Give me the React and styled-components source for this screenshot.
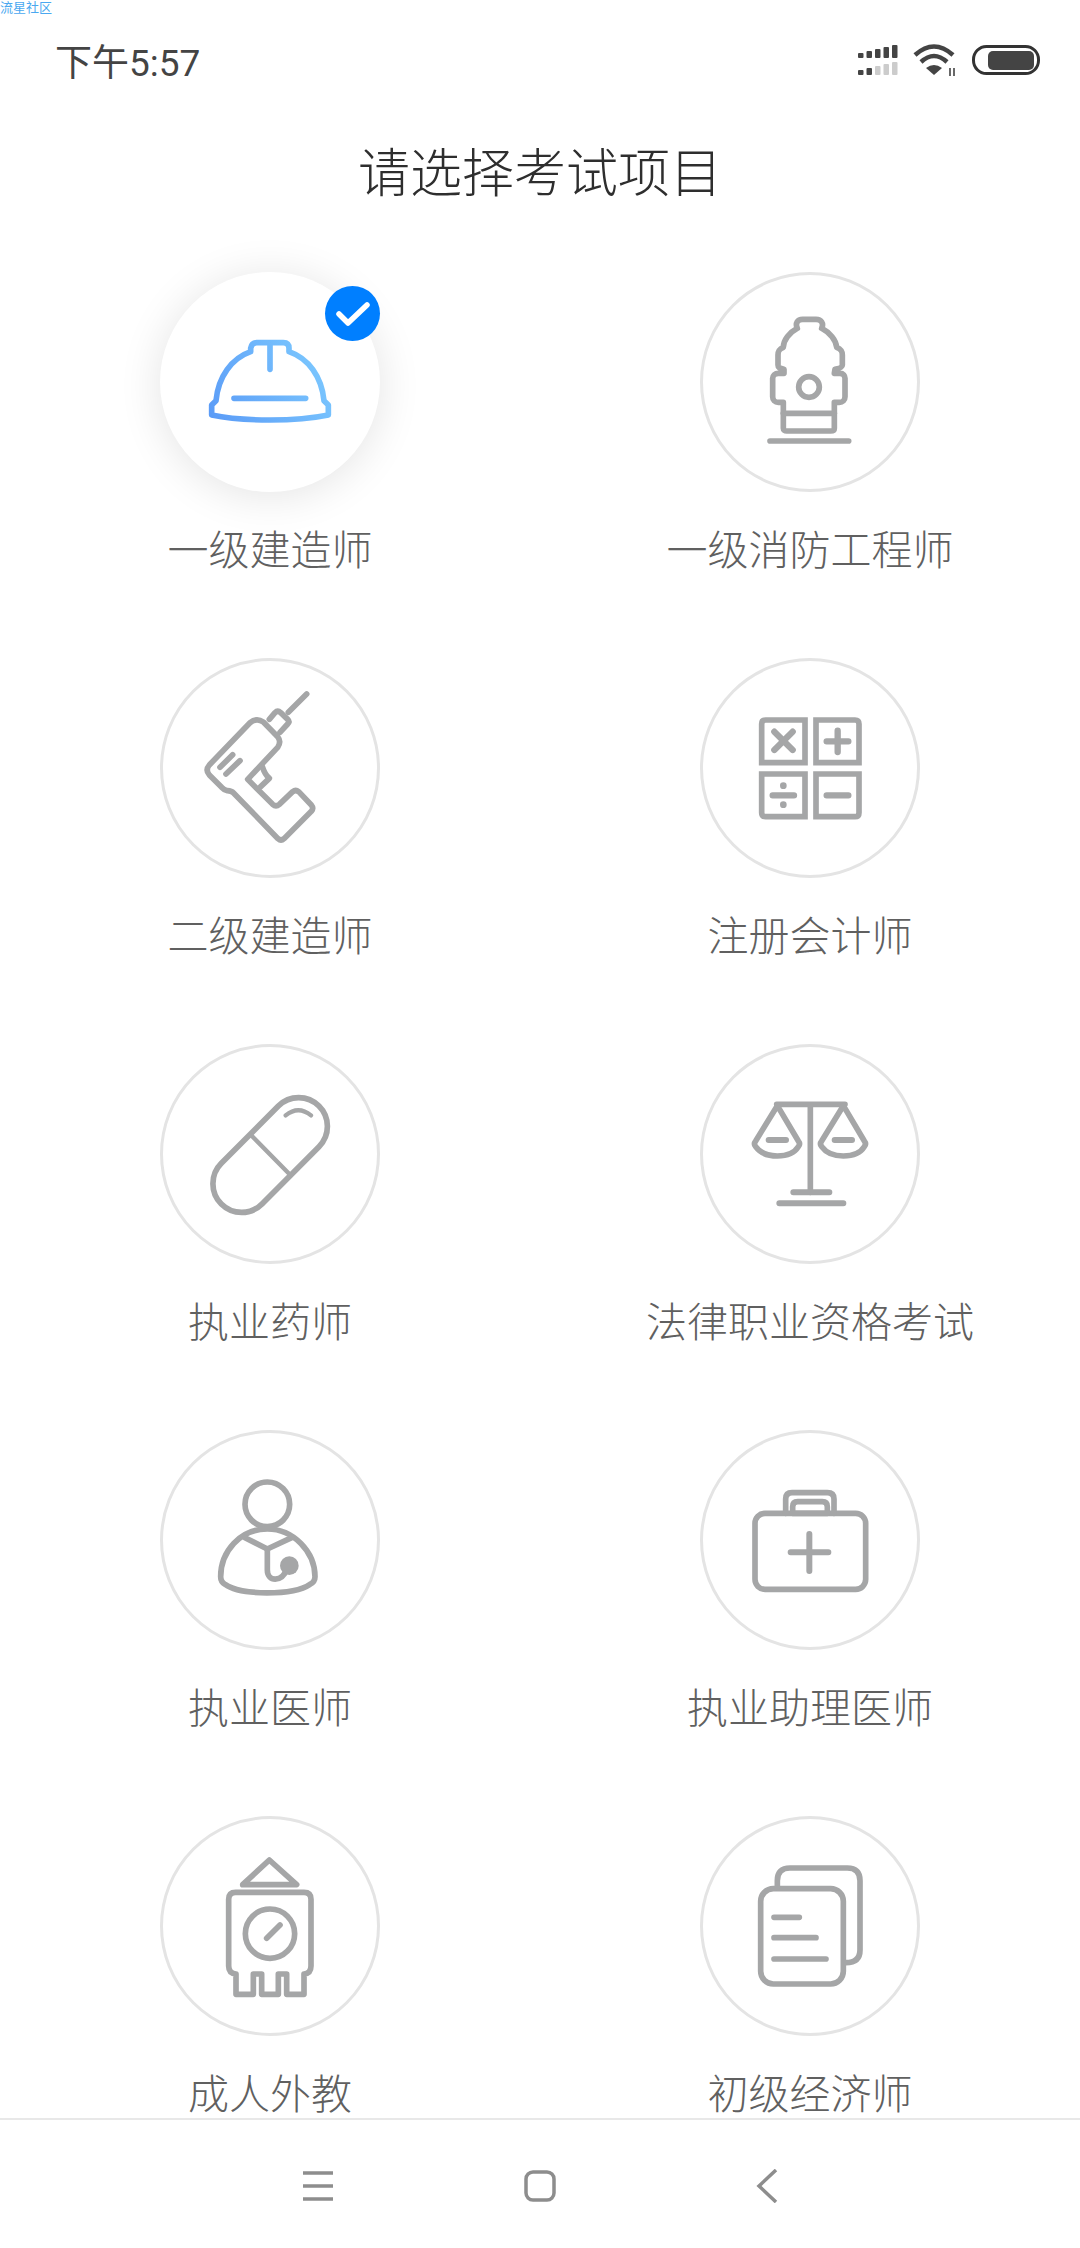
import React from 'react';
import styled, { createGlobalStyle } from 'styled-components';

const GlobalStyle = createGlobalStyle`
  html, body {
    margin: 0;
    padding: 0;
    background: #fff;
  }
`;

const Page = styled.div`
  width: 1080px;
  height: 2248px;
  display: flex;
  flex-direction: column;
  overflow: hidden;
  background: #fff;
  font-family: 'Noto Sans CJK SC', 'Noto Sans', sans-serif;
`;

const Tag = styled.div`
  height: 14px;
  font-size: 13px;
  line-height: 13px;
  color: #4aa8f0;
`;

const StatusBar = styled.div`
  height: 92px;
  padding: 0 40px 0 55px;
  display: flex;
  align-items: center;
  justify-content: space-between;
`;

const Time = styled.div`
  font-size: 37px;
  color: #444;
  font-family: 'Roboto', 'Noto Sans CJK SC', sans-serif;
`;

const StatusIcons = styled.div`
  display: flex;
  align-items: center;
  gap: 15px;
`;

const Title = styled.h1`
  margin: 28px 0 0;
  font-size: 52px;
  line-height: 72px;
  font-weight: 300;
  color: #2e2e2e;
  text-align: center;
`;

const Main = styled.main`
  flex: 1;
  min-height: 0;
  padding-top: 66px;
  display: grid;
  grid-template-columns: 1fr 1fr;
  grid-auto-rows: 386px;
`;

const Cell = styled.div`
  display: flex;
  flex-direction: column;
  align-items: center;
`;

const Circle = styled.div`
  position: relative;
  width: 220px;
  height: 220px;
  box-sizing: border-box;
  border-radius: 50%;
  background: #fff;
  border: ${(p) => (p.$active ? 'none' : '3px solid #e4e4e4')};
  box-shadow: ${(p) => (p.$active ? '0 4px 44px rgba(0, 0, 0, 0.11)' : 'none')};
  display: flex;
  align-items: center;
  justify-content: center;
`;

const Label = styled.div`
  margin-top: 30px;
  font-size: 41px;
  line-height: 50px;
  font-weight: 300;
  color: #606060;
`;

const Badge = styled.div`
  position: absolute;
  top: 14px;
  right: 0;
  width: 55px;
  height: 55px;
  border-radius: 50%;
  background: #007fff;
  display: flex;
  align-items: center;
  justify-content: center;
`;

const NavBar = styled.nav`
  position: relative;
  height: 130px;
  flex: none;
  box-sizing: border-box;
  border-top: 2px solid #e8e8e8;
  padding: 4px 0 0 298px;
  display: flex;
  align-items: center;
  background: #fff;
`;

const NavItem = styled.div`
  width: 40px;
  margin-left: ${(p) => p.$gap || 0}px;
  display: flex;
  justify-content: center;
`;

const IconSvg = styled.svg`
  position: absolute;
  left: ${(p) => (p.$active ? 0 : -3)}px;
  top: ${(p) => (p.$active ? 0 : -3)}px;
  width: 220px;
  height: 220px;
  fill: none;
  stroke: ${(p) => p.$stroke || '#a5a6a7'};
  stroke-width: 17;
  stroke-linecap: round;
  stroke-linejoin: round;
`;

const NavIcon = styled.svg`
  fill: none;
  stroke: #8d8d8d;
  stroke-width: 3.5;
`;

const HelmetIcon = () => (
  <IconSvg viewBox="90 66 660 660" $active $stroke="url(#helmetGrad)">
    <defs>
      <linearGradient id="helmetGrad" gradientUnits="userSpaceOnUse" x1="245" y1="500" x2="595" y2="300">
        <stop offset="0" stopColor="#5b9cf7" />
        <stop offset="1" stopColor="#7ecbff" />
      </linearGradient>
    </defs>
    <path d="M245 465 L258 452 C265 380 305 325 362 305 L362 295 Q365 278 380 278 L460 278 Q477 278 477 295 L477 305 C535 325 575 380 582 452 L595 465 L595 495 C500 515 340 515 245 495 Z" />
    <path d="M420 285 L420 358 M312 445 L527 445" />
  </IconSvg>
);

const HydrantIcon = () => (
  <IconSvg viewBox="60 36 660 660">
    <path d="M352 205 C345 190 352 178 368 178 L408 178 C424 178 432 190 425 205 C450 218 468 240 470 262 C485 268 487 275 487 285 L487 315 C487 322 480 325 465 328 L463 340 L480 340 C490 340 495 347 495 355 L495 410 C495 420 488 427 478 427 L463 427 L463 505 C463 511 458 513 452 513 L320 513 C314 513 310 510 310 505 L310 427 L295 427 C285 427 278 420 278 410 L278 355 C278 347 285 340 295 340 L312 340 L312 328 C295 325 294 320 294 315 L294 285 C294 275 296 268 310 262 C310 240 328 218 352 205 Z" />
    <path d="M310 460 L463 460" />
    <circle cx="387" cy="381" r="31" />
    <path d="M270 543 L506 543" />
  </IconSvg>
);

const DrillIcon = () => (
  <IconSvg viewBox="30 24 660 660">
    <path d="M470 132 L415 187" />
    <path d="M358 208 L375 188 Q383 180 392 188 L413 208 Q420 215 413 222 L390 247" />
    <path d="M178 345 L300 218 Q320 202 340 216 L383 260 Q395 275 383 292 L293 388 L368 463 Q378 472 388 463 L428 425 Q437 418 446 425 L484 465 Q492 475 484 484 L402 566 Q393 574 384 566 L250 428 Q245 423 232 422 Q222 420 215 412 L178 375 Q165 360 178 345 Z" />
    <path d="M337 350 Q345 375 358 385 L332 410" />
    <path d="M210 352 L248 314 M228 372 L270 332" />
  </IconSvg>
);

const CalcIcon = () => (
  <IconSvg viewBox="30 24 660 660">
    <path strokeLinejoin="miter" d="M215 338 L215 222 Q215 210 227 210 L345 210 L345 338 Z" />
    <path strokeLinejoin="miter" d="M378 210 L495 210 Q507 210 507 222 L507 338 L378 338 Z" />
    <path strokeLinejoin="miter" d="M215 372 L345 372 L345 500 L227 500 Q215 500 215 488 Z" />
    <path strokeLinejoin="miter" d="M378 372 L507 372 L507 488 Q507 500 495 500 L378 500 Z" />
    <path strokeWidth="19" d="M253 245 L308 300 M308 245 L253 300 M410 274 L475 274 M443 242 L443 306 M248 436 L312 436 M410 436 L475 436" />
    <circle cx="280" cy="407" r="10" fill="#a5a6a7" stroke="none" />
    <circle cx="280" cy="464" r="10" fill="#a5a6a7" stroke="none" />
  </IconSvg>
);

const PillIcon = () => (
  <IconSvg viewBox="30 12 660 660">
    <path d="M385 198 A86 86 0 0 1 507 320 L336 492 A86 86 0 0 1 214 370 Z" />
    <path strokeWidth="13" d="M302 284 L418 402 M407 226 Q445 195 483 226" />
  </IconSvg>
);

const ScaleIcon = () => (
  <IconSvg viewBox="30 12 660 660">
    <path d="M260 193 L465 193 M361 193 L361 457" />
    <path strokeWidth="18" d="M310 457 L418 457 M268 490 L460 490" />
    <path d="M262 197 L197 303 Q190 312 197 320 C215 345 240 348 262 348 C285 348 310 345 325 320 Q332 312 325 303 Z" />
    <path d="M460 197 L395 303 Q388 312 395 320 C413 345 438 348 460 348 C483 348 508 345 523 320 Q530 312 523 303 Z" />
    <path strokeWidth="18" d="M236 300 L288 300 M434 300 L486 300" />
  </IconSvg>
);

const DoctorIcon = () => (
  <IconSvg viewBox="30 15 660 660">
    <circle cx="352" cy="238" r="67" />
    <path d="M352 312 C270 312 212 380 212 455 Q212 470 225 478 C270 512 430 512 480 478 Q495 470 495 455 C495 380 430 312 352 312 Z" />
    <path d="M285 338 L352 372 L425 338" />
    <path d="M352 372 L352 435 C352 470 395 475 412 430" />
    <circle cx="418" cy="422" r="28" fill="#a5a6a7" stroke="none" />
  </IconSvg>
);

const KitIcon = () => (
  <IconSvg viewBox="30 15 660 660">
    <rect x="195" y="265" width="332" height="228" rx="30" />
    <path d="M287 265 L287 222 Q287 203 306 203 L412 203 Q432 203 432 222 L432 265" />
    <path d="M308 265 L308 245 Q308 230 323 230 L397 230 Q412 230 412 245 L412 265 Z" />
    <path strokeWidth="18" d="M302 382 L415 382 M358 327 L358 438" />
  </IconSvg>
);

const ClockIcon = () => (
  <IconSvg viewBox="30 18 660 660">
    <path d="M358 150 L440 224 L278 224 Z" />
    <path d="M236 268 Q236 247 257 247 L462 247 Q483 247 483 268 L483 468 Q483 490 462 492 L462 553 L410 553 L410 492 L385 492 L385 553 L335 553 L335 492 L310 492 L310 553 L258 553 L258 492 Q236 490 236 468 Z" />
    <circle cx="360" cy="371" r="74" />
    <path d="M350 385 L390 345" />
  </IconSvg>
);

const DocsIcon = () => (
  <IconSvg viewBox="30 18 660 660">
    <rect x="212" y="236" width="248" height="286" rx="38" />
    <path d="M262 232 L262 212 Q262 174 300 174 L472 174 Q510 174 510 212 L510 420 Q510 458 468 458" />
    <path d="M252 322 L328 322 M252 383 L378 383 M252 447 L408 447" />
  </IconSvg>
);

const SignalIcon = () => (
  <svg width="40" height="30" viewBox="0 0 40 30">
    <g fill="#444">
      <rect x="0" y="8" width="5.5" height="5" rx="1" />
      <rect x="8.5" y="6" width="5.5" height="7" rx="1" />
      <rect x="17" y="4" width="5.5" height="9" rx="1" />
      <rect x="25.5" y="2" width="5.5" height="11" rx="1" />
      <rect x="34" y="0" width="5.5" height="13" rx="1" />
      <rect x="0" y="25" width="5.5" height="5" rx="1" />
      <rect x="8.5" y="23" width="5.5" height="7" rx="1" />
    </g>
    <g fill="#ccc">
      <rect x="17" y="21" width="5.5" height="9" rx="1" />
      <rect x="25.5" y="19" width="5.5" height="11" rx="1" />
      <rect x="34" y="17" width="5.5" height="13" rx="1" />
    </g>
  </svg>
);

const WifiIcon = () => (
  <svg width="44" height="32" viewBox="0 0 44 32" fill="none" stroke="#444" strokeWidth="4.5">
    <path d="M2 11 Q21 -6 40 11" />
    <path d="M8 18 Q21 6 34 18" />
    <path d="M21 31 L13 24 Q21 18 29 24 Z" fill="#444" stroke="none" />
    <path strokeWidth="1.6" d="M37 24 L37 32 M41 24 L41 32" />
  </svg>
);

const BatteryIcon = () => (
  <svg width="68" height="30" viewBox="0 0 68 30">
    <rect x="1.5" y="1.5" width="65" height="27" rx="13" fill="none" stroke="#333" strokeWidth="3" />
    <rect x="16" y="6" width="46" height="19" rx="5" fill="#444" />
  </svg>
);

const items = [
  { label: '一级建造师', Icon: HelmetIcon, active: true },
  { label: '一级消防工程师', Icon: HydrantIcon },
  { label: '二级建造师', Icon: DrillIcon },
  { label: '注册会计师', Icon: CalcIcon },
  { label: '执业药师', Icon: PillIcon },
  { label: '法律职业资格考试', Icon: ScaleIcon },
  { label: '执业医师', Icon: DoctorIcon },
  { label: '执业助理医师', Icon: KitIcon },
  { label: '成人外教', Icon: ClockIcon },
  { label: '初级经济师', Icon: DocsIcon },
];

export default function App() {
  return (
    <Page>
      <GlobalStyle />
      <Tag>流星社区</Tag>
      <StatusBar>
        <Time>下午5:57</Time>
        <StatusIcons>
          <SignalIcon />
          <WifiIcon />
          <BatteryIcon />
        </StatusIcons>
      </StatusBar>
      <Title>请选择考试项目</Title>
      <Main>
        {items.map(({ label, Icon, active }) => (
          <Cell key={label}>
            <Circle $active={active}>
              <Icon />
              {active && (
                <Badge>
                  <svg width="36" height="28" viewBox="0 0 36 28" fill="none" stroke="#fff" strokeWidth="5.5" strokeLinecap="round" strokeLinejoin="round">
                    <path d="M4 14 L13 23 L32 5" />
                  </svg>
                </Badge>
              )}
            </Circle>
            <Label>{label}</Label>
          </Cell>
        ))}
      </Main>
      <NavBar>
        <NavItem>
          <NavIcon width="30" height="30" viewBox="0 0 30 30">
            <path d="M0 2 L30 2 M0 15 L30 15 M0 28 L30 28" />
          </NavIcon>
        </NavItem>
        <NavItem $gap={182}>
          <NavIcon width="32" height="32" viewBox="0 0 32 32">
            <rect x="2" y="2" width="28" height="28" rx="7" />
          </NavIcon>
        </NavItem>
        <NavItem $gap={187}>
          <NavIcon width="22" height="34" viewBox="0 0 22 34">
            <path d="M20 1 L3 17 L20 33" />
          </NavIcon>
        </NavItem>
      </NavBar>
    </Page>
  );
}
